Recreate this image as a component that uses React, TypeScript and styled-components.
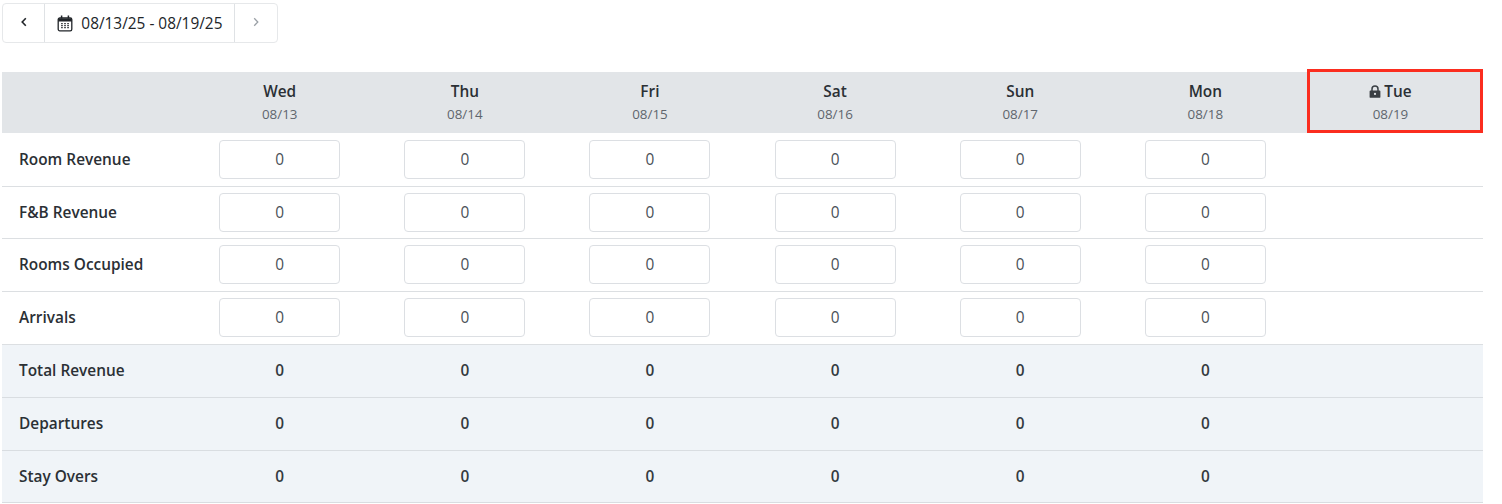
import React from 'react';
import styled, { createGlobalStyle } from 'styled-components';

const DAYS = [
  { name: 'Wed', date: '08/13' },
  { name: 'Thu', date: '08/14' },
  { name: 'Fri', date: '08/15' },
  { name: 'Sat', date: '08/16' },
  { name: 'Sun', date: '08/17' },
  { name: 'Mon', date: '08/18' },
];

const INPUT_ROWS = ['Room Revenue', 'F&B Revenue', 'Rooms Occupied', 'Arrivals'];
const TOTAL_ROWS = ['Total Revenue', 'Departures', 'Stay Overs'];

const App: React.FC = () => {
  return (
    <>
      <GlobalStyle />
      <Page>
        {/* date range picker */}
        <RangeBar>
          <ArrowButton aria-label="previous">
            <svg width="10" height="10" viewBox="0 0 10 10" fill="none">
              <path d="M6.8 1.2 3.2 5l3.6 3.8" stroke="#212529" strokeWidth="1.6" />
            </svg>
          </ArrowButton>
          <RangeLabel>
            <svg width="16" height="17" viewBox="0 0 16 17" fill="none">
              <rect x="1.2" y="3" width="13.6" height="12.8" rx="1.6" stroke="#212529" strokeWidth="1.3" />
              <path d="M1.2 5h13.6" stroke="#212529" strokeWidth="3" />
              <path d="M4.6.6v3M11.4.6v3" stroke="#212529" strokeWidth="1.5" />
              <path
                d="M4.2 8.6h1.5M7.25 8.6h1.5M10.3 8.6h1.5M4.2 10.6h1.5M7.25 10.6h1.5M10.3 10.6h1.5M4.2 12.6h1.5M7.25 12.6h1.5M10.3 12.6h1.5"
                stroke="#212529"
                strokeWidth="1.1"
              />
            </svg>
            <span>08/13/25 - 08/19/25</span>
          </RangeLabel>
          <ArrowButton aria-label="next">
            <svg width="10" height="10" viewBox="0 0 10 10" fill="none">
              <path d="M3.2 1.2 6.8 5 3.2 8.8" stroke="#9aa0a6" strokeWidth="1.3" />
            </svg>
          </ArrowButton>
        </RangeBar>

        <Table>
          {/* header */}
          <HeaderRow>
            <span />
            {DAYS.map(day => (
              <HeaderCell key={day.date}>
                <DayName>{day.name}</DayName>
                <DayDate>{day.date}</DayDate>
              </HeaderCell>
            ))}
            <HeaderCell>
              <DayName>
                <svg width="12" height="13" viewBox="0 0 12 13" fill="none">
                  <path d="M3 6V3.9a3 3 0 0 1 6 0V6" stroke="#3a3f44" strokeWidth="1.5" />
                  <path
                    fillRule="evenodd"
                    clipRule="evenodd"
                    d="M1.5 5.4h9c.5 0 .9.4.9.9v5.6c0 .5-.4.9-.9.9h-9a.9.9 0 0 1-.9-.9V6.3c0-.5.4-.9.9-.9ZM6 7.8a1.1 1.1 0 1 0 0 2.2 1.1 1.1 0 0 0 0-2.2Z"
                    fill="#3a3f44"
                  />
                </svg>
                Tue
              </DayName>
              <DayDate>08/19</DayDate>
              <Highlight />
            </HeaderCell>
          </HeaderRow>

          {/* editable rows */}
          {INPUT_ROWS.map(label => (
            <Row key={label}>
              <RowLabel>{label}</RowLabel>
              {DAYS.map(day => (
                <Cell key={day.date}>
                  <ValueInput readOnly value="0" />
                </Cell>
              ))}
              <span />
            </Row>
          ))}

          {/* calculated rows */}
          {TOTAL_ROWS.map(label => (
            <Row key={label} $total>
              <RowLabel>{label}</RowLabel>
              {DAYS.map(day => (
                <Cell key={day.date}>
                  <TotalValue>0</TotalValue>
                </Cell>
              ))}
              <span />
            </Row>
          ))}
        </Table>
      </Page>
    </>
  );
};

export default App;

/*** style ***/
const GlobalStyle = createGlobalStyle`
  * {
    box-sizing: border-box;
  }

  body {
    margin: 0;
    background: #ffffff;
    color: #212529;
    font-family: 'Open Sans', sans-serif;
    overflow: hidden;
  }
`;

const Page = styled.div`
  width: 1502px;
  height: 504px;
  padding: 3px 19px 0 2px;
`;

const RangeBar = styled.div`
  display: inline-flex;
  vertical-align: top;
  height: 40px;
  border: 1px solid #e6e8ea;
  border-radius: 4px;
  background: #ffffff;
`;

const ArrowButton = styled.div`
  width: 41.4px;
  display: flex;
  align-items: center;
  justify-content: center;
  padding-bottom: 3px;
`;

const RangeLabel = styled.div`
  width: 191px;
  display: flex;
  align-items: center;
  justify-content: center;
  gap: 8px;
  border-left: 1px solid #dfe2e5;
  border-right: 1px solid #dfe2e5;
  font-size: 15.4px;
  color: #212529;
`;

const Table = styled.div`
  margin-top: 29px;
  width: 1481px;
`;

const HeaderRow = styled.div`
  display: grid;
  grid-template-columns: repeat(8, 1fr);
  height: 61px;
  margin-bottom: 0.8px;
  background: #e2e5e8;
`;

const HeaderCell = styled.div`
  position: relative;
  display: flex;
  flex-direction: column;
  align-items: center;
  padding-top: 8px;
`;

const DayName = styled.div`
  display: flex;
  align-items: center;
  gap: 3px;
  height: 22px;
  font-size: 15.4px;
  font-weight: 600;
  color: #2b3035;
`;

const DayDate = styled.div`
  margin-top: 2px;
  font-size: 13.4px;
  line-height: 20px;
  color: #5f666d;
`;

const Highlight = styled.div`
  position: absolute;
  inset: -3px 0 0 9px;
  border: 3px solid #fb2d1f;
`;

const Row = styled.div<{ $total?: boolean }>`
  display: grid;
  grid-template-columns: repeat(8, 1fr);
  height: 52.8px;
  align-items: center;
  padding-bottom: ${props => (props.$total ? '0' : '0.8px')};
  border-bottom: 1px solid ${props => (props.$total ? '#d9dde1' : '#dcdfe2')};
  background: ${props => (props.$total ? '#f0f4f8' : '#ffffff')};
`;

const RowLabel = styled.div`
  padding-left: 17px;
  font-size: 15.4px;
  font-weight: 600;
  color: #2b3035;
`;

const Cell = styled.div`
  display: flex;
  justify-content: center;
`;

const ValueInput = styled.input`
  width: 121px;
  height: 39px;
  border: 1px solid #dcdfe3;
  border-radius: 4px;
  background: #ffffff;
  outline: none;
  text-align: center;
  font-family: 'Open Sans', sans-serif;
  font-size: 15.4px;
  color: #495057;
`;

const TotalValue = styled.span`
  font-size: 15.4px;
  font-weight: 600;
  color: #343a40;
`;
